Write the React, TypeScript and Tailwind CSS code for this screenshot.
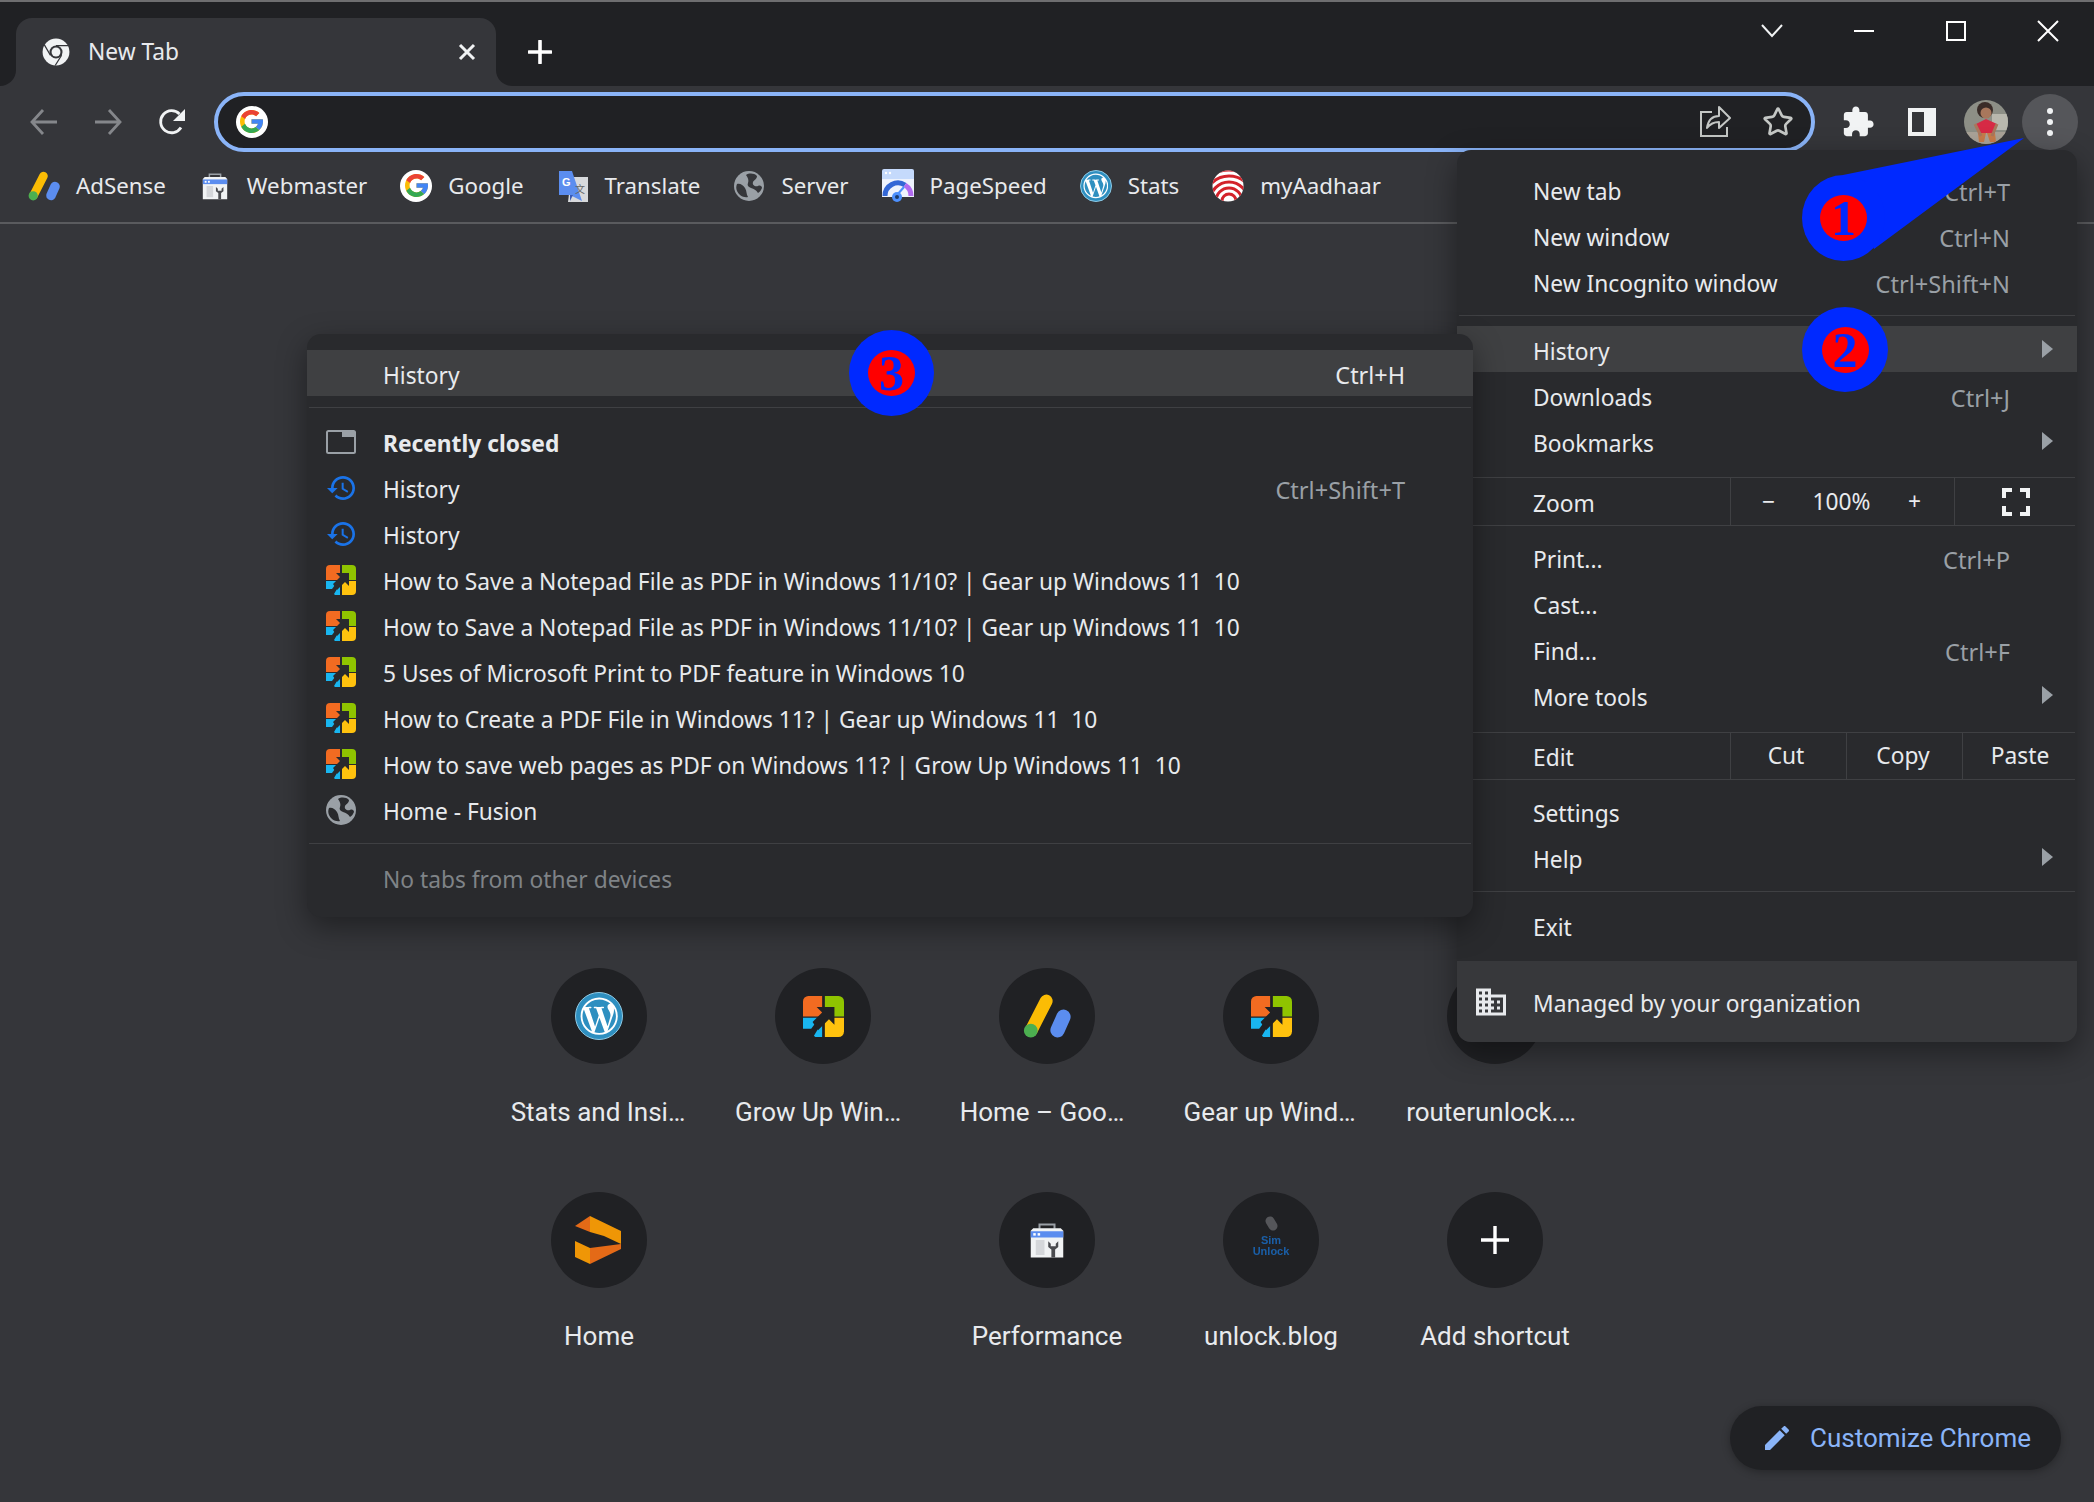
import type { ReactNode } from 'react';
import { Star } from 'lucide-react';
import { FaWordpressSimple } from 'react-icons/fa';

const UI = "font-['Noto_Sans',sans-serif]";

/* ---------- logos ---------- */
function ChromeMono() {
  return (
    <svg viewBox="0 0 24 24" className="h-[28px] w-[28px]">
      <circle cx="12" cy="12" r="11.5" fill="#f1f3f4" />
      <circle cx="12" cy="12" r="5.6" fill="#35363a" />
      <circle cx="12" cy="12" r="3.8" fill="#f1f3f4" />
      <path d="M12 6.5H23M7.2 14.8 1.8 5.5M16.8 14.8 11.3 23.6" stroke="#35363a" strokeWidth="1.1" fill="none" />
    </svg>
  );
}

function GoogleG({ size = 32 }: { size?: number }) {
  return (
    <span className="flex shrink-0 items-center justify-center rounded-full bg-white" style={{ width: size, height: size }}>
      <svg viewBox="4 4 40 40" style={{ width: size * 0.72, height: size * 0.72 }}>
        <path fill="#fbbc05" d="M43.611 20.083H42V20H24v8h11.303c-1.649 4.657-6.08 8-11.303 8-6.627 0-12-5.373-12-12s5.373-12 12-12c3.059 0 5.842 1.154 7.961 3.039l5.657-5.657C34.046 6.053 29.268 4 24 4 12.955 4 4 12.955 4 24s8.955 20 20 20 20-8.955 20-20c0-1.341-.138-2.65-.389-3.917z" />
        <path fill="#ea4335" d="M6.306 14.691l6.571 4.819C14.655 15.108 18.961 12 24 12c3.059 0 5.842 1.154 7.961 3.039l5.657-5.657C34.046 6.053 29.268 4 24 4 16.318 4 9.656 8.337 6.306 14.691z" />
        <path fill="#34a853" d="M24 44c5.166 0 9.86-1.977 13.409-5.192l-6.19-5.238A11.91 11.91 0 0 1 24 36c-5.202 0-9.619-3.317-11.283-7.946l-6.522 5.025C9.505 39.556 16.227 44 24 44z" />
        <path fill="#4285f4" d="M43.611 20.083H42V20H24v8h11.303a12.04 12.04 0 0 1-4.087 5.571l.003-.002 6.19 5.238C36.971 39.205 44 34 44 24c0-1.341-.138-2.65-.389-3.917z" />
      </svg>
    </span>
  );
}

function AdSense({ size = 32 }: { size?: number }) {
  return (
    <svg viewBox="0 0 32 30" style={{ width: size, height: size }}>
      <path d="M5.5 24.5 15.5 5" stroke="#fbbc04" strokeWidth="8.5" strokeLinecap="round" />
      <path d="M23 24.5 27 15.5" stroke="#5b8def" strokeWidth="9.5" strokeLinecap="round" />
      <circle cx="5.2" cy="24.8" r="4.6" fill="#4caf50" />
    </svg>
  );
}

function Toolbox({ size = 32 }: { size?: number }) {
  return (
    <svg viewBox="0 0 32 32" style={{ width: size, height: size }}>
      <path d="M10 7V3.5h12V7" stroke="#9aa0a6" strokeWidth="1.6" fill="none" />
      <path d="M3 8.5 5 6.5h22l2 2V30H3z" fill="#f1f3f4" />
      <rect x="3" y="9" width="26" height="5" fill="#5b8def" />
      <rect x="5" y="10.5" width="2" height="2" fill="#fff" />
      <rect x="8.5" y="10.5" width="2" height="2" fill="#fff" />
      <rect x="7" y="16" width="7" height="12" fill="#d5d7da" />
      <path d="M17 17v4.5l2.5 2V30h3v-6.5l2.5-2V17l-2 2v2h-4v-2z" fill="#4a4b4f" />
    </svg>
  );
}

function TranslateIcon() {
  return (
    <svg viewBox="0 0 32 32" className="h-[32px] w-[32px]">
      <path d="M14 7h17v25H11z" fill="#d7d9dc" />
      <path d="M2 1h13l10 30-12-6H2z" fill="#5b8def" />
      <path d="M13 25h3l-3 6z" fill="#3b5bb5" />
      <text x="5" y="16" fontSize="11" fontWeight="700" fill="#fff" fontFamily="Liberation Sans, sans-serif">G</text>
      <text x="18" y="23" fontSize="10" fill="#666" fontFamily="Noto Sans CJK SC, sans-serif">文</text>
    </svg>
  );
}

function Globe({ size = 30, hole = '#35363a' }: { size?: number; hole?: string }) {
  return (
    <svg viewBox="0 0 30 30" style={{ width: size, height: size }}>
      <circle cx="15" cy="15" r="15" fill="#9aa0a6" />
      <path d="M3 13c3-1 6 1 8 4s1 6 3 9c-5 1-9-2-11-6-1-2-1-5 0-7z" fill={hole} />
      <path d="M12 4c3-2 8-2 11 1 0 3-3 4-4 6-1 3 2 5 5 4 2-1 4 0 4 2-1 2-2 4-4 5-2-3-4-4-7-5-3-1-4-3-3-5 1-3 0-5-2-8z" fill={hole} />
    </svg>
  );
}

function PageSpeed() {
  return (
    <svg viewBox="0 0 32 34" className="h-[34px] w-[32px]">
      <path d="M0 2a2 2 0 0 1 2-2h28a2 2 0 0 1 2 2v28H0z" fill="#c5dafc" />
      <circle cx="4" cy="4" r="1.2" fill="#fff" />
      <circle cx="8" cy="4" r="1.2" fill="#fff" />
      <path d="M0 10h32v18H0z" fill="#eef3fd" />
      <path d="M3 27a13 13 0 0 1 20-11" stroke="#3367d6" strokeWidth="5" fill="none" />
      <path d="M23 16a13 13 0 0 1 6 11" stroke="#b26bf0" strokeWidth="5" fill="none" />
      <path d="M0 28h32v6H0z" fill="#35363a" />
      <path d="M15 26l7-8" stroke="#4d90fe" strokeWidth="2" />
      <circle cx="15" cy="28" r="5" fill="#4d90fe" />
      <circle cx="15" cy="28" r="2" fill="#1a3a6b" />
    </svg>
  );
}

function WordPress({ size = 32 }: { size?: number }) {
  return (
    <span className="flex shrink-0 items-center justify-center rounded-full border border-[#8fcbe6] bg-[#2e8fc0]" style={{ width: size, height: size }}>
      <FaWordpressSimple color="#fff" size={size * 0.8} />
    </span>
  );
}

function Aadhaar() {
  return (
    <svg viewBox="0 0 32 32" className="h-[32px] w-[32px]">
      <defs>
        <clipPath id="aadhaar-clip"><circle cx="16" cy="16" r="15.5" /></clipPath>
      </defs>
      <g clipPath="url(#aadhaar-clip)">
        <rect width="32" height="32" fill="#fff" />
        <circle cx="17" cy="31" r="7" fill="none" stroke="#d3222a" strokeWidth="3" />
        <circle cx="17" cy="31" r="13" fill="none" stroke="#d3222a" strokeWidth="3" />
        <circle cx="17" cy="31" r="19" fill="none" stroke="#d3222a" strokeWidth="3" />
        <circle cx="17" cy="31" r="25" fill="none" stroke="#d3222a" strokeWidth="3" />
        <circle cx="17" cy="31" r="31" fill="none" stroke="#d3222a" strokeWidth="3" />
      </g>
    </svg>
  );
}

function GearLogo({ size = 30, arrow = '#292a2d' }: { size?: number; arrow?: string }) {
  return (
    <svg viewBox="0 0 30 30" style={{ width: size, height: size }}>
      <path d="M0 4a4 4 0 0 1 4-4h10v15H0z" fill="#f26b21" />
      <path d="M16 0h10a4 4 0 0 1 4 4v11H16z" fill="#8fc400" />
      <path d="M0 16h12L6 24H0z" fill="#19b6f0" />
      <path d="M8 29l6-10v11H9z" fill="#19b6f0" />
      <path d="M16 16h14v10a4 4 0 0 1-4 4H16z" fill="#ffc20e" />
      <path d="M7 19 14 12 10 8h13v13l-4-4-8 8z" fill={arrow} />
    </svg>
  );
}

function SiderLogo() {
  return (
    <svg viewBox="0 0 48 48" className="h-[48px] w-[48px]">
      <path d="M0 10 15 0v16z" fill="#e46a17" />
      <path d="M15 0 46 15v13L29 20 15 16z" fill="#ef9606" />
      <path d="M46 28v5L15 48V32z" fill="#e46a17" />
      <path d="M0 25l15 7v16L0 41z" fill="#ef9606" />
    </svg>
  );
}

function SimUnlock() {
  return (
    <div className="flex h-[48px] w-[36px] flex-col items-center leading-[11px] text-[#1a5fa8] blur-[0.6px]">
      <span className="mb-[4px] h-[15px] w-[9px] -rotate-[30deg] rounded-full bg-[#55565a]" />
      <span className="font-['Liberation_Sans',sans-serif] text-[11px] font-bold">Sim</span>
      <span className="font-['Liberation_Sans',sans-serif] text-[11px] font-bold">Unlock</span>
    </div>
  );
}

function Avatar() {
  return (
    <svg viewBox="0 0 44 44" className="h-[44px] w-[44px]">
      <defs>
        <clipPath id="avatar-clip"><circle cx="22" cy="22" r="22" /></clipPath>
      </defs>
      <g clipPath="url(#avatar-clip)">
        <rect width="44" height="44" fill="#8d8f86" />
        <rect x="28" y="14" width="16" height="16" fill="#b9b8ae" />
        <rect y="32" width="44" height="12" fill="#a9a297" />
        <circle cx="21" cy="10" r="8" fill="#3a2c28" />
        <circle cx="22" cy="13" r="5.5" fill="#a8775c" />
        <path d="M12 24 22 19l11 5-3 9H15z" fill="#d62a45" />
        <path d="M14 33h8l-2 9h-5zM23 33h8l1 9h-6z" fill="#c77b4a" />
        <path d="M11 24l6 12M33 24l-5 12" stroke="#a8775c" strokeWidth="3" />
      </g>
    </svg>
  );
}

function HistoryIcon() {
  return (
    <svg viewBox="1 3 21 18" className="h-[24px] w-[28px]">
      <path fill="#1a73e8" d="M13 3c-4.97 0-9 4.03-9 9H1l3.89 3.89.07.14L9 12H6c0-3.87 3.13-7 7-7s7 3.13 7 7-3.13 7-7 7c-1.93 0-3.68-.79-4.94-2.06l-1.42 1.42C8.27 19.99 10.51 21 13 21c4.97 0 9-4.03 9-9s-4.03-9-9-9zm-1 5v5l4.28 2.54.72-1.21-3.5-2.08V8H12z" />
    </svg>
  );
}

/* ---------- menu bits ---------- */
function Sep() {
  return <div className="mx-[2px] h-[1px] shrink-0 bg-[#3f4043]" />;
}

function Arrow() {
  return (
    <svg viewBox="0 0 11 18" className="h-[18px] w-[11px] shrink-0">
      <path d="M0 0 11 9 0 18z" fill="#9aa0a6" />
    </svg>
  );
}

function MenuRow({ label, keys, sub, hover }: { label: string; keys?: string; sub?: boolean; hover?: boolean }) {
  return (
    <div className={`flex h-[46px] items-center justify-between pl-[76px] ${sub ? 'pr-[24px]' : 'pr-[67px]'} ${hover ? 'bg-[#3f4042]' : ''}`}>
      <span className="pt-[7px] text-[#e8eaed]">{label}</span>
      {keys && <span className="pt-[7px] text-[23.6px] text-[#9aa0a6]">{keys}</span>}
      {sub && <Arrow />}
    </div>
  );
}

function SubRow({ icon, label, keys, bold }: { icon?: ReactNode; label: string; keys?: string; bold?: boolean }) {
  return (
    <div className="flex h-[46px] items-center pr-[68px]">
      <span className="flex w-[76px] shrink-0 justify-center pr-[8px] pt-[2px]">{icon}</span>
      <span className={`whitespace-pre pt-[7px] text-[#e8eaed] ${bold ? 'font-bold' : ''}`}>{label}</span>
      {keys && <span className="ml-auto pt-[7px] text-[23.6px] text-[#9aa0a6]">{keys}</span>}
    </div>
  );
}

function ClosedTabsIcon() {
  return (
    <svg viewBox="0 0 30 24" className="h-[24px] w-[30px]">
      <rect x="1" y="1" width="28" height="22" rx="1.5" fill="none" stroke="#9aa0a6" strokeWidth="2" />
      <rect x="16" y="1" width="13" height="6" fill="#9aa0a6" />
    </svg>
  );
}

function Badge({ n, className }: { n: string; className: string }) {
  return (
    <div className={`absolute flex items-center justify-center rounded-[50%] bg-[#0029ff] ${className}`}>
      <div className="flex h-[46px] w-[47px] items-center justify-center rounded-[50%] bg-[#ff0000] font-['Liberation_Serif',serif] text-[50px] leading-none font-bold text-[#0029ff]">
        {n}
      </div>
    </div>
  );
}

/* ---------- data ---------- */
const bookmarks: { label: string; icon: ReactNode }[] = [
  { label: 'AdSense', icon: <AdSense /> },
  { label: 'Webmaster', icon: <Toolbox size={30} /> },
  { label: 'Google', icon: <GoogleG /> },
  { label: 'Translate', icon: <TranslateIcon /> },
  { label: 'Server', icon: <Globe /> },
  { label: 'PageSpeed', icon: <PageSpeed /> },
  { label: 'Stats', icon: <WordPress /> },
  { label: 'myAadhaar', icon: <Aadhaar /> },
];

const recent: { label: string; logo: 'gear' | 'globe' }[] = [
  { label: 'How to Save a Notepad File as PDF in Windows 11/10? | Gear up Windows 11  10', logo: 'gear' },
  { label: 'How to Save a Notepad File as PDF in Windows 11/10? | Gear up Windows 11  10', logo: 'gear' },
  { label: '5 Uses of Microsoft Print to PDF feature in Windows 10', logo: 'gear' },
  { label: 'How to Create a PDF File in Windows 11? | Gear up Windows 11  10', logo: 'gear' },
  { label: 'How to save web pages as PDF on Windows 11? | Grow Up Windows 11  10', logo: 'gear' },
  { label: 'Home - Fusion', logo: 'globe' },
];

// cut-off labels sit a little left of the tile centre, as the ellipsis box does in the browser
const tiles: { label: string; icon?: ReactNode; nudge?: string }[] = [
  { label: 'Stats and Insi…', icon: <WordPress size={48} />, nudge: 'pr-[2px]' },
  { label: 'Grow Up Win…', icon: <GearLogo size={41} arrow="#202124" />, nudge: 'pr-[10px]' },
  { label: 'Home – Goo…', icon: <AdSense size={48} />, nudge: 'pr-[10px]' },
  { label: 'Gear up Wind…', icon: <GearLogo size={41} arrow="#202124" />, nudge: 'pr-[3px]' },
  { label: 'routerunlock.…', nudge: 'pr-[8px]' },
  { label: 'Home', icon: <SiderLogo /> },
  { label: '' },
  { label: 'Performance', icon: <Toolbox size={40} /> },
  { label: 'unlock.blog', icon: <SimUnlock /> },
  {
    label: 'Add shortcut',
    icon: (
      <svg viewBox="0 0 30 30" className="h-[30px] w-[30px]">
        <path d="M15 1v28M1 15h28" stroke="#fff" strokeWidth="3.4" />
      </svg>
    ),
  },
];

export default function App() {
  return (
    <div className={`relative h-[1502px] w-[2094px] overflow-hidden bg-[#35363a] ${UI}`}>
      {/* Tab strip */}
      <div className="h-[2px] bg-[#6e6e70]" />
      <div className="flex h-[84px] bg-[#202124]">
        <div className="relative ml-[16px] mt-[16px] flex h-[68px] w-[480px] items-center rounded-t-[16px] bg-[#35363a] pl-[26px] pr-[20px]">
          <span className="absolute bottom-0 left-[-16px] h-[16px] w-[16px] bg-[#35363a]">
            <span className="block h-full w-full rounded-br-[16px] bg-[#202124]" />
          </span>
          <span className="absolute bottom-0 right-[-16px] h-[16px] w-[16px] bg-[#35363a]">
            <span className="block h-full w-full rounded-bl-[16px] bg-[#202124]" />
          </span>
          <ChromeMono />
          <span className="ml-[18px] text-[22.75px] text-[#e8eaed]">New Tab</span>
          <svg viewBox="0 0 18 18" className="ml-auto h-[18px] w-[18px]">
            <path d="M2 2l14 14M16 2 2 16" stroke="#f1f3f4" strokeWidth="3" />
          </svg>
        </div>
        <div className="ml-[32px] mt-[38px] h-[28px]">
          <svg viewBox="0 0 24 24" className="h-[24px] w-[24px]">
            <path d="M12 1v22M1 12h22" stroke="#fff" strokeWidth="3.6" strokeLinecap="round" />
          </svg>
        </div>
        <div className="ml-auto flex h-[58px] text-white">
          <div className="flex w-[92px] items-center justify-center">
            <svg viewBox="0 0 22 14" className="h-[14px] w-[22px]"><path d="M1 1l10 11L21 1" stroke="#f1f3f4" strokeWidth="2" fill="none" /></svg>
          </div>
          <div className="flex w-[92px] items-center justify-center">
            <div className="h-[2px] w-[20px] bg-white" />
          </div>
          <div className="flex w-[92px] items-center justify-center">
            <div className="h-[20px] w-[20px] border-2 border-white" />
          </div>
          <div className="flex w-[92px] items-center justify-center">
            <svg viewBox="0 0 22 22" className="h-[22px] w-[22px]"><path d="M1 1l20 20M21 1 1 21" stroke="#fff" strokeWidth="2" /></svg>
          </div>
        </div>
      </div>

      {/* Toolbar */}
      <div className="flex h-[66px] pl-[12px] pt-[6px]">
        <div className="flex h-[60px] w-[64px] items-center justify-center">
          <svg viewBox="0 0 28 26" className="h-[26px] w-[28px]"><path d="M27 13H2M13 1 2 13l11 12" stroke="#85878b" strokeWidth="2.8" fill="none" /></svg>
        </div>
        <div className="flex h-[60px] w-[64px] items-center justify-center">
          <svg viewBox="0 0 28 26" className="h-[26px] w-[28px]"><path d="M1 13h25M15 1l11 12-11 12" stroke="#85878b" strokeWidth="2.8" fill="none" /></svg>
        </div>
        <div className="flex h-[60px] w-[64px] items-center justify-center">
          <svg viewBox="0 0 28 28" className="h-[28px] w-[28px]">
            <path d="M23 19.5A11 11 0 1 1 21.5 6" stroke="#f1f3f4" strokeWidth="2.8" fill="none" />
            <path d="M27 1v12H15z" fill="#f1f3f4" />
          </svg>
        </div>
        <div className="ml-[10px] flex h-[60px] w-[1601px] items-center rounded-full border-4 border-[#8ab4f8] bg-[#202124] pl-[18px] pr-[17px]">
          <GoogleG />
          <svg viewBox="0 0 32 32" className="ml-auto h-[32px] w-[32px]">
            <path d="M13 6H2v24h26v-9" stroke="#c4c7c5" strokeWidth="2" fill="none" />
            <path d="M20 1l11 11-11 10v-6c-5 0-9 2-12 6 1-7 5-12 12-12z" stroke="#c4c7c5" strokeWidth="2" fill="none" strokeLinejoin="round" />
          </svg>
          <Star className="ml-[31px]" size={32} strokeWidth={2} color="#c4c7c5" />
        </div>
        <div className="ml-[11px] flex">
          <div className="flex h-[60px] w-[64px] items-center justify-center">
            <svg viewBox="0 0 24 24" className="h-[34px] w-[34px]">
              <path fill="#f1f3f4" d="M20.5 11H19V7c0-1.1-.9-2-2-2h-4V3.5C13 2.12 11.88 1 10.5 1S8 2.12 8 3.5V5H4c-1.1 0-1.99.9-1.99 2v3.8H3.5c1.49 0 2.7 1.21 2.7 2.7s-1.21 2.7-2.7 2.7H2V20c0 1.1.9 2 2 2h3.8v-1.5c0-1.49 1.21-2.7 2.7-2.7 1.49 0 2.7 1.21 2.7 2.7V22H17c1.1 0 2-.9 2-2v-4h1.5c1.38 0 2.5-1.12 2.5-2.5S21.88 11 20.5 11z" />
            </svg>
          </div>
          <div className="flex h-[60px] w-[64px] items-center justify-center">
            <div className="flex h-[28px] w-[28px] border-[4px] border-r-[12px] border-[#f1f3f4]" />
          </div>
          <div className="flex h-[60px] w-[64px] items-center justify-center">
            <Avatar />
          </div>
          <div className="flex h-[60px] w-[64px] items-center justify-center">
            <div className="flex h-[56px] w-[56px] flex-col items-center justify-center gap-[5px] rounded-full bg-[#55565a]">
              <span className="h-[6px] w-[6px] rounded-full bg-[#f1f3f4]" />
              <span className="h-[6px] w-[6px] rounded-full bg-[#f1f3f4]" />
              <span className="h-[6px] w-[6px] rounded-full bg-[#f1f3f4]" />
            </div>
          </div>
        </div>
      </div>

      {/* Bookmarks bar */}
      <div className="flex h-[72px] items-center gap-[33px] border-b-2 border-[#5a5b5e] pb-[2px] pl-[28px] text-[22.3px] text-[#e8eaed]">
        {bookmarks.map((b) => (
          <div key={b.label} className="flex items-center gap-[16px]">
            <span className="flex w-[32px] justify-center">{b.icon}</span>
            <span>{b.label}</span>
          </div>
        ))}
      </div>

      {/* New tab page shortcuts */}
      <div className="ml-[487px] mt-[744px] grid grid-cols-[repeat(5,224px)] font-['Roboto',sans-serif] text-[26px] text-[#e8eaed]">
        {tiles.map((t, i) => (
          <div key={i} className="flex h-[224px] flex-col items-center">
            {t.label && (
              <>
                <div className="flex h-[96px] w-[96px] items-center justify-center rounded-full bg-[#202124]">{t.icon}</div>
                <div className={`mt-[32px] h-[32px] leading-[32px] ${t.nudge ?? ''}`}>{t.label}</div>
              </>
            )}
          </div>
        ))}
      </div>

      {/* Customize Chrome */}
      <div className="absolute left-[1730px] top-[1406px] flex h-[64px] w-[331px] items-center rounded-full bg-[#202124] pl-[35px] font-['Roboto',sans-serif] text-[26px] text-[#8ab4f8] shadow-[0_2px_8px_rgba(0,0,0,0.3)]">
        <svg viewBox="3 3 18 18" className="h-[24px] w-[24px]">
          <path fill="#8ab4f8" d="M3 17.25V21h3.75L17.81 9.94l-3.75-3.75L3 17.25zM20.71 7.04c.39-.39.39-1.02 0-1.41l-2.34-2.34c-.39-.39-1.02-.39-1.41 0l-1.83 1.83 3.75 3.75 1.83-1.83z" />
        </svg>
        <span className="ml-[21px]">Customize Chrome</span>
      </div>

      {/* App menu */}
      <div className="absolute left-[1457px] top-[150px] flex h-[892px] w-[620px] flex-col overflow-hidden rounded-[14px] bg-[#292a2d] pt-[16px] text-[22.75px] shadow-[0_10px_30px_rgba(0,0,0,0.4)]">
        <MenuRow label="New tab" keys="Ctrl+T" />
        <MenuRow label="New window" keys="Ctrl+N" />
        <MenuRow label="New Incognito window" keys="Ctrl+Shift+N" />
        <div className="mt-[11px] mb-[10px]"><Sep /></div>
        <MenuRow hover sub label="History" />
        <MenuRow label="Downloads" keys="Ctrl+J" />
        <MenuRow sub label="Bookmarks" />
        <div className="mt-[13px]"><Sep /></div>
        <div className="flex h-[47px] text-[#e8eaed]">
          <div className="flex w-[273px] items-center pl-[76px] pt-[6px]">Zoom</div>
          <div className="grid w-[224px] grid-cols-[73px_73px_73px] items-center border-l border-[#3f4043] pl-[1px] pt-[2px] text-center">
            <span>−</span>
            <span>100%</span>
            <span>+</span>
          </div>
          <div className="flex flex-1 items-center justify-center border-l border-[#3f4043]">
            <svg viewBox="0 0 28 28" className="h-[28px] w-[28px]">
              <path d="M2 10V2h8M18 2h8v8M26 18v8h-8M10 26H2v-8" stroke="#f1f3f4" strokeWidth="4" fill="none" />
            </svg>
          </div>
        </div>
        <Sep />
        <div className="mt-[8px]" />
        <MenuRow label="Print..." keys="Ctrl+P" />
        <MenuRow label="Cast..." />
        <MenuRow label="Find..." keys="Ctrl+F" />
        <MenuRow sub label="More tools" />
        <div className="mt-[14px]"><Sep /></div>
        <div className="flex h-[46px] text-[#e8eaed]">
          <div className="flex w-[273px] items-center pl-[76px] pt-[4px]">Edit</div>
          <div className="flex w-[116px] items-center justify-center border-l border-[#3f4043] pr-[5px]">Cut</div>
          <div className="flex w-[116px] items-center justify-center border-l border-[#3f4043] pr-[3px]">Copy</div>
          <div className="flex flex-1 items-center justify-center border-l border-[#3f4043]">Paste</div>
        </div>
        <Sep />
        <div className="mt-[8px]" />
        <MenuRow label="Settings" />
        <MenuRow sub label="Help" />
        <div className="mt-[11px] mb-[10px]"><Sep /></div>
        <MenuRow label="Exit" />
        <div className="mt-[13px] flex h-[81px] items-center bg-[#37383b] pl-[19px] text-[#e8eaed]">
          <svg viewBox="2 3 20 18" className="h-[28px] w-[30px]">
            <path fill="#e8eaed" d="M12 7V3H2v18h20V7H12zM6 19H4v-2h2v2zm0-4H4v-2h2v2zm0-4H4V9h2v2zm0-4H4V5h2v2zm4 12H8v-2h2v2zm0-4H8v-2h2v2zm0-4H8V9h2v2zm0-4H8V5h2v2zm10 12h-8v-2h2v-2h-2v-2h2v-2h-2V9h8v10zm-2-8h-2v2h2v-2zm0 4h-2v2h2v-2z" />
          </svg>
          <span className="ml-[27px] pt-[5px]">Managed by your organization</span>
        </div>
      </div>

      {/* History submenu, opened over the app menu */}
      <div className="absolute left-[307px] top-[334px] flex h-[583px] w-[1166px] flex-col overflow-hidden rounded-[14px] bg-[#292a2d] pt-[16px] text-[22.75px] shadow-[0_10px_30px_rgba(0,0,0,0.4)]">
        <div className="flex h-[46px] shrink-0 items-center justify-between bg-[#3f4042] pl-[76px] pr-[68px]">
          <span className="pt-[6px] text-[#e8eaed]">History</span>
          <span className="pt-[6px] text-[23.4px] text-[#e8eaed]">Ctrl+H</span>
        </div>
        <div className="mt-[11px] mb-[10px]"><Sep /></div>
        <SubRow bold label="Recently closed" icon={<ClosedTabsIcon />} />
        <SubRow label="History" keys="Ctrl+Shift+T" icon={<HistoryIcon />} />
        <SubRow label="History" icon={<HistoryIcon />} />
        {recent.map((r, i) => (
          <SubRow key={i} label={r.label} icon={r.logo === 'gear' ? <GearLogo /> : <Globe hole="#292a2d" />} />
        ))}
        <div className="mt-[11px]"><Sep /></div>
        <div className="mt-[11px] flex h-[46px] items-center pl-[76px] pt-[4px] text-[#7f8387]">No tabs from other devices</div>
      </div>

      {/* Annotations */}
      <svg viewBox="0 0 240 130" className="absolute left-[1790px] top-[130px] h-[130px] w-[240px]">
        <path d="M53 45 234 8 84 119z" fill="#0029ff" />
      </svg>
      <Badge n="1" className="left-[1802px] top-[175px] h-[86px] w-[83px]" />
      <Badge n="2" className="left-[1802px] top-[307px] h-[85px] w-[86px]" />
      <Badge n="3" className="left-[849px] top-[330px] h-[86px] w-[85px]" />
    </div>
  );
}
